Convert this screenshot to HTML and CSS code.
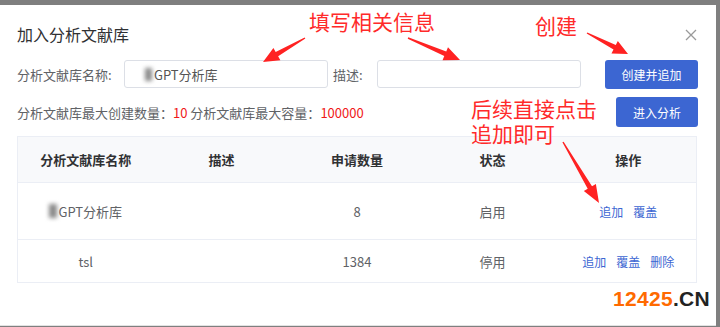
FILE: index.html
```html
<!DOCTYPE html>
<html lang="zh-CN">
<head>
<meta charset="utf-8">
<title>加入分析文献库</title>
<link rel="stylesheet" href="styles.css">
</head>
<body>
<div class="modal">
  <div class="header">
    <span class="title">加入分析文献库</span>
    <span class="close">
      <svg width="12" height="12" viewBox="0 0 12 12"><path d="M1 1L11 11M11 1L1 11" stroke="#9a9a9a" stroke-width="1.3" fill="none"/></svg>
    </span>
  </div>
  <div class="form-row">
    <label class="lbl lbl-name">分析文献库名称:</label>
    <div class="input"><span class="blur"></span>GPT分析库</div>
    <label class="lbl lbl-desc">描述:</label>
    <div class="input"></div>
    <button class="btn btn-create">创建并追加</button>
  </div>
  <div class="info-row">
    <span class="info">分析文献库最大创建数量：<em>10</em> 分析文献库最大容量：<em>100000</em></span>
    <button class="btn btn-enter">进入分析</button>
  </div>
  <div class="table">
    <div class="tr th">
      <div>分析文献库名称</div><div>描述</div><div>申请数量</div><div>状态</div><div>操作</div>
    </div>
    <div class="tr row1">
      <div><span class="blur small"></span>GPT分析库</div><div></div><div>8</div><div>启用</div>
      <div class="ops"><a>追加</a><a>覆盖</a></div>
    </div>
    <div class="tr row2">
      <div>tsl</div><div></div><div>1384</div><div>停用</div>
      <div class="ops"><a>追加</a><a>覆盖</a><a>删除</a></div>
    </div>
  </div>
</div>

<div class="note n1">填写相关信息</div>
<div class="note n2">创建</div>
<div class="note n3">后续直接点击</div>
<div class="note n4">追加即可</div>

<svg class="arrows" width="720" height="327" viewBox="0 0 720 327">
  <g fill="#ff2222">
    <polygon points="304.65,37.39 275.66,51.89 273.43,47.98 263,62 280.37,60.14 278.14,56.23 305.35,38.61"/>
    <polygon points="407.73,38.64 444.29,56.06 442.53,60.21 460,60 447.99,47.31 446.24,51.46 408.27,37.36"/>
    <polygon points="586.68,33.62 613.51,49.39 611.46,53.39 628,54 617.84,40.93 615.79,44.94 587.32,32.38"/>
    <polygon points="562.40,142.36 587.71,188.77 583.83,191.06 599,203 595.89,183.94 592.01,186.23 563.60,141.64"/>
  </g>
</svg>

<div class="watermark"><span class="num">12425</span>.CN</div>
</body>
</html>
```
FILE: styles.css
```css
* { box-sizing: border-box; }
html, body { margin: 0; padding: 0; }
body {
  width: 720px;
  height: 327px;
  background: #7f7f7f;
  font-family: "Noto Sans CJK SC", "Noto Sans", sans-serif;
  position: relative;
  overflow: hidden;
}
.modal {
  margin-top: 5px;
  width: 716px;
  height: 321px;
  background: #fff;
  border-bottom: 1px solid #e2e2e2;
  padding: 19px 18px 0 17px;
}
.header {
  display: flex;
  justify-content: space-between;
  align-items: center;
  height: 20px;
}
.title {
  font-size: 16px;
  color: #303133;
  line-height: 20px;
}
.close { display: flex; margin-right: 1px; margin-top: 2px; }
.form-row {
  margin-top: 16px;
  display: flex;
  align-items: center;
  height: 28px;
}
.lbl {
  font-size: 13px;
  color: #606266;
  white-space: nowrap;
}
.lbl-name { width: 107px; }
.lbl-desc { width: 44px; margin-left: 5px; }
.input {
  width: 204px;
  height: 28px;
  border: 1px solid #dcdfe6;
  border-radius: 3px;
  font-size: 13px;
  color: #555;
  display: flex;
  align-items: center;
  padding-left: 20px;
}
.blur {
  display: inline-block;
  width: 7px;
  height: 13px;
  background: #8a8a8a;
  filter: blur(2px);
  margin-right: 2px;
}
.btn {
  border: none;
  background: #3c66d2;
  color: #fff;
  border-radius: 3px;
  font-family: inherit;
  font-size: 12px;
  padding: 0;
}
.btn-create { width: 93px; height: 29px; margin-left: 24px; }
.info-row {
  margin-top: 9px;
  height: 30px;
  display: flex;
  align-items: center;
}
.info { font-size: 13px; color: #606266; }
.info em { font-style: normal; color: #f01818; }
.btn-enter { width: 82px; height: 30px; margin-left: auto; }
.table {
  margin-top: 9px;
  width: 680px;
  border: 1px solid #ebeef5;
}
.tr {
  display: grid;
  grid-template-columns: repeat(5, 1fr);
  align-items: center;
  text-align: center;
  font-size: 13px;
  color: #606266;
}
.tr > div { display: flex; justify-content: center; align-items: center; }
.th {
  height: 46px;
  background: #f8f9fb;
  font-weight: bold;
  color: #303133;
  border-bottom: 1px solid #ebeef5;
}
.row1 { height: 57px; border-bottom: 1px solid #ebeef5; }
.row2 { height: 42px; }
.blur.small { width: 8px; height: 14px; margin-right: 1px; }
.ops a {
  color: #3c66d2;
  font-size: 12px;
  margin: 0 5px;
}
.note {
  position: absolute;
  color: #ff2a2a;
  font-size: 21px;
  line-height: 21px;
  font-family: "Noto Sans CJK SC", sans-serif;
}
.n1 { left: 309px; top: 11px; }
.n2 { left: 535px; top: 15px; }
.n3 { left: 471px; top: 98px; }
.n4 { left: 471px; top: 123px; }
.arrows { position: absolute; left: 0; top: 0; }
.watermark {
  position: absolute;
  left: 613px;
  top: 287px;
  font-family: "Liberation Sans", Arial, sans-serif;
  font-weight: bold;
  font-size: 21px;
  color: #222;
  letter-spacing: 0.3px;
}
.watermark .num { color: #ff6a00; }
```
